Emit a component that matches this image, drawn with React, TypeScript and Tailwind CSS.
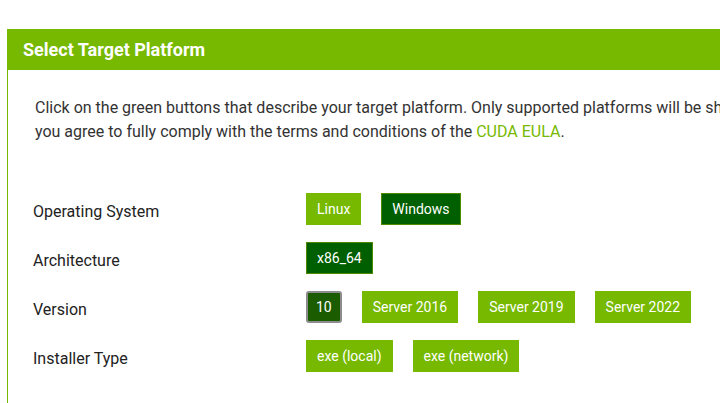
import { useState } from 'react';

type Row = {
    label: string;
    options: string[];
};

const rows: Row[] = [
    { label: 'Operating System', options: ['Linux', 'Windows'] },
    { label: 'Architecture', options: ['x86_64'] },
    { label: 'Version', options: ['10', 'Server 2016', 'Server 2019', 'Server 2022'] },
    { label: 'Installer Type', options: ['exe (local)', 'exe (network)'] },
];

export default function App() {
    const [selected] = useState<Record<string, string>>({
        'Operating System': 'Windows',
        Architecture: 'x86_64',
        Version: '10',
    });

    return (
        <div className="w-screen h-screen overflow-hidden bg-white font-['Roboto','Liberation_Sans',sans-serif]">
            <div className="ml-[7px] mt-[29px] w-[1100px] h-[400px] border-l border-[#76b900]">
                <div className="h-[41px] bg-[#76b900] flex items-center pl-[15px]">
                    <h2 className="text-white font-bold text-[18px]">Select Target Platform</h2>
                </div>
                <div className="pl-[27px] pt-[26px]">
                    <p className="text-[16px] leading-[24px] text-[#333] whitespace-nowrap">
                        Click on the green buttons that describe your target platform. Only supported platforms will be shown. By downloading and using the software,
                        <br />
                        you agree to fully comply with the terms and conditions of the{' '}
                        <a href="#" className="text-[#76b900]">CUDA EULA</a>.
                    </p>
                </div>
                <div className="pl-[25px] mt-[49px] flex flex-col gap-[17px]">
                    {rows.map((row) => (
                        <div key={row.label} className="flex items-center h-[32px]">
                            <div className="w-[273px] pt-[5px] text-[16px] text-[#222]">{row.label}</div>
                            <div className="flex gap-[20px]">
                                {row.options.map((opt) => {
                                    const isSel = selected[row.label] === opt;
                                    const focused = row.label === 'Version' && isSel;
                                    let cls = 'px-[10px] bg-[#76b900] border border-[#76b900]';
                                    if (isSel) cls = 'px-[10px] bg-[#005f00] border border-[#4f8a00]';
                                    if (focused) cls = 'px-[8px] bg-[#1c5c00] border-2 border-[#8c8c8c] rounded-[3px]';
                                    return (
                                        <button
                                            key={opt}
                                            className={`h-[32px] text-[14px] text-white ${cls}`}
                                        >
                                            {opt}
                                        </button>
                                    );
                                })}
                            </div>
                        </div>
                    ))}
                </div>
            </div>
        </div>
    );
}
